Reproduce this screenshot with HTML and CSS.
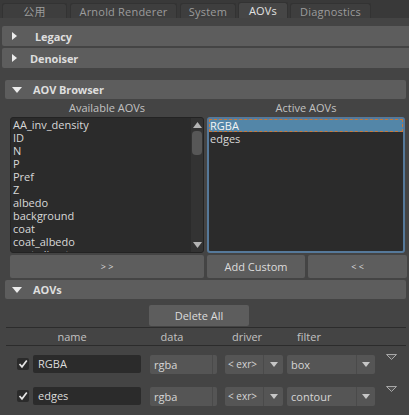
FILE: index.html
```html
<!DOCTYPE html>
<html>
<head>
<meta charset="utf-8">
<link rel="stylesheet" href="styles.css">
</head>
<body>
<div class="tabbar">
  <div class="tab tab-1">公用</div>
  <div class="tab tab-2">Arnold Renderer</div>
  <div class="tab tab-3">System</div>
  <div class="tab tab-4 active">AOVs</div>
  <div class="tab tab-5">Diagnostics</div>
</div>

<div class="fh fh-wide fh-legacy"><span class="tri-right"></span><span class="fh-title">Legacy</span></div>
<div class="fh fh-wide fh-denoiser"><span class="tri-right"></span><span class="fh-title">Denoiser</span></div>

<div class="fh fh-open fh-browser"><span class="tri-down"></span><span class="fh-title">AOV Browser</span></div>

<div class="browser">
  <div class="col-label">Available AOVs</div>
  <div class="col-label">Active AOVs</div>
  <div class="list list-left">
    <div class="items">
      <div class="item">AA_inv_density</div>
      <div class="item">ID</div>
      <div class="item">N</div>
      <div class="item">P</div>
      <div class="item">Pref</div>
      <div class="item">Z</div>
      <div class="item">albedo</div>
      <div class="item">background</div>
      <div class="item">coat</div>
      <div class="item">coat_albedo</div>
      <div class="item">coat_direct</div>
    </div>
    <div class="scrollbar">
      <svg class="sb-arrow" width="9" height="6" viewBox="0 0 9 6"><polygon points="0,6 4.5,0 9,6" fill="#b4b4b4"/></svg>
      <div class="sb-track"><div class="sb-thumb"></div></div>
      <svg class="sb-arrow" width="9" height="6" viewBox="0 0 9 6"><polygon points="0,0 4.5,6 9,0" fill="#b4b4b4"/></svg>
    </div>
  </div>
  <div class="list list-right">
    <div class="item selected">RGBA</div>
    <div class="item">edges</div>
  </div>
</div>

<div class="btnrow">
  <div class="btn btn-arrows">&gt; &gt;</div>
  <div class="btn">Add Custom</div>
  <div class="btn btn-arrows">&lt; &lt;</div>
</div>

<div class="fh fh-open fh-aovs"><span class="tri-down"></span><span class="fh-title">AOVs</span></div>

<div class="btn btn-delete">Delete All</div>

<div class="thead">
  <div class="th th-name">name</div>
  <div class="th th-data">data</div>
  <div class="th th-driver">driver</div>
  <div class="th th-filter">filter</div>
</div>

<div class="aov-row">
  <div class="check"><svg width="12" height="12" viewBox="0 0 12 12"><polyline points="2.5,6 5,8.8 9.8,2.6" fill="none" stroke="#e6e6e6" stroke-width="1.7"/></svg></div>
  <div class="namefield">RGBA</div>
  <div class="combo combo-data"><span class="combo-text">rgba</span><span class="combo-btn"></span></div>
  <div class="combo combo-driver"><span class="combo-text small">&lt; exr&gt;</span><span class="combo-btn"><span class="arrow"></span></span></div>
  <div class="combo combo-filter"><span class="combo-text">box</span><span class="combo-btn"><span class="arrow"></span></span></div>
  <svg class="outline-tri" width="11" height="6" viewBox="0 0 11 6"><polygon points="0.5,0.5 10.5,0.5 5.5,5.5" fill="#505050" stroke="#a8a8a8" stroke-width="1"/></svg>
</div>

<div class="aov-row">
  <div class="check"><svg width="12" height="12" viewBox="0 0 12 12"><polyline points="2.5,6 5,8.8 9.8,2.6" fill="none" stroke="#e6e6e6" stroke-width="1.7"/></svg></div>
  <div class="namefield">edges</div>
  <div class="combo combo-data"><span class="combo-text">rgba</span><span class="combo-btn"></span></div>
  <div class="combo combo-driver"><span class="combo-text small">&lt; exr&gt;</span><span class="combo-btn"><span class="arrow"></span></span></div>
  <div class="combo combo-filter"><span class="combo-text">contour</span><span class="combo-btn"><span class="arrow"></span></span></div>
  <svg class="outline-tri" width="11" height="6" viewBox="0 0 11 6"><polygon points="0.5,0.5 10.5,0.5 5.5,5.5" fill="#505050" stroke="#a8a8a8" stroke-width="1"/></svg>
</div>
</body>
</html>
```

FILE: styles.css
```css
* { box-sizing: border-box; }
html, body {
  margin: 0;
  padding: 0;
}
body {
  width: 409px;
  height: 415px;
  overflow: hidden;
  background: #444444;
  font-family: "Open Sans", "Noto Sans CJK SC", sans-serif;
  font-size: 11px;
  color: #dcdcdc;
}

/* tabs */
.tabbar {
  height: 18px;
  background: #393939;
  display: flex;
  align-items: flex-end;
  padding-left: 2px;
}
.tab {
  height: 15px;
  background: #3e3e3e;
  border: 1px solid #333;
  border-bottom: none;
  border-radius: 3px 3px 0 0;
  color: #9c9c9c;
  display: flex;
  align-items: center;
  justify-content: center;
  line-height: 1;
  letter-spacing: 0.2px;
}
.tab-1 { width: 65px; margin-right: 3px; font-family: "Noto Sans CJK SC", sans-serif; }
.tab-2 { width: 107px; margin-right: 3px; }
.tab-3 { width: 56px; margin-right: 2px; }
.tab-4 { width: 50px; margin-right: 2px; }
.tab-5 { width: 81px; }
.tab.active {
  background: #464646;
  color: #e2e2e2;
  height: 16px;
}

/* frame headers */
.fh {
  background: #5d5d5d;
  border-radius: 2px;
  display: flex;
  align-items: center;
  font-weight: bold;
  color: #dedede;
  letter-spacing: -0.1px;
}
.fh-wide {
  height: 20px;
  margin-left: 2px;
  margin-right: -4px;
  padding-left: 10px;
}
.fh-legacy { margin-top: 8px; }
.fh-legacy .fh-title { margin-left: 18px; }
.fh-denoiser { margin-top: 2px; }
.fh-denoiser .fh-title { margin-left: 13px; }
.fh-open {
  height: 19px;
  margin-left: 5px;
  margin-right: 3px;
  padding-left: 7px;
}
.fh-open .fh-title { margin-left: 11px; }
.fh-browser { margin-top: 12px; }
.fh-aovs { margin-top: 2px; }
.tri-right {
  width: 0; height: 0;
  border-left: 5px solid #ececec;
  border-top: 4.5px solid transparent;
  border-bottom: 4.5px solid transparent;
}
.tri-down {
  width: 0; height: 0;
  border-top: 6px solid #ececec;
  border-left: 5px solid transparent;
  border-right: 5px solid transparent;
}

/* browser */
.browser {
  display: grid;
  grid-template-columns: 194px 198px;
  grid-template-rows: 18px 136px;
  column-gap: 3px;
  margin-left: 10px;
}
.col-label {
  text-align: center;
  color: #c2c2c2;
  line-height: 18px;
}
.list {
  background: #2b2b2b;
  border-radius: 3px;
  overflow: hidden;
}
.list-left {
  border: 1px solid #232323;
  display: flex;
}
.list-right {
  border: 2px solid #56799a;
  padding-top: 0;
}
.items { flex: 1; padding-left: 2px; overflow: hidden; }
.item {
  height: 13px;
  line-height: 13px;
  white-space: nowrap;
  color: #d8d8d8;
}
.list-right .item { padding-left: 1px; }
.item.selected {
  background: #5386a8;
  outline: 1px dashed #c8783a;
  outline-offset: -1px;
  color: #f4f4f4;
}
.scrollbar {
  width: 12px;
  background: #333333;
  display: flex;
  flex-direction: column;
  align-items: center;
  padding: 4px 0 4px;
}
.sb-arrow { flex: none; }
.sb-track { flex: 1; width: 100%; padding: 3px 1px 0; }
.sb-thumb {
  height: 24px;
  background: #575757;
  border-radius: 4px;
}

/* buttons */
.btnrow {
  display: grid;
  grid-template-columns: 194px 98px 99px;
  column-gap: 3px;
  margin: 2px 0 0 10px;
}
.btn {
  height: 23px;
  background: #5d5d5d;
  border-radius: 2px;
  display: flex;
  align-items: center;
  justify-content: center;
  color: #dcdcdc;
}
.btn-arrows { font-size: 9px; letter-spacing: 0; }
.btn-delete {
  width: 100px;
  height: 21px;
  margin: 6px 0 0 149px;
}

/* table */
.thead {
  display: grid;
  grid-template-columns: 132px 68px 82px 42px;
  margin: 1px 3px 0 6px;
  height: 19px;
  border-top: 1px solid #2c2c2c;
  border-bottom: 1px solid #2c2c2c;
}
.th {
  text-align: center;
  color: #c2c2c2;
  line-height: 17px;
}
.aov-row {
  display: flex;
  align-items: center;
  height: 20px;
  padding-left: 17px;
  margin-top: 8px;
}
.aov-row + .aov-row { margin-top: 12px; }
.check {
  width: 12px;
  height: 12px;
  background: #2b2b2b;
  border-radius: 2px;
  margin-right: 4px;
  display: flex;
}
.namefield {
  width: 108px;
  height: 18px;
  background: #2b2b2b;
  border-radius: 2px;
  margin-right: 9px;
  padding-left: 5px;
  line-height: 18px;
  color: #dcdcdc;
}
.combo {
  height: 19px;
  background: #555555;
  border-radius: 2px;
  display: flex;
  align-items: stretch;
}
.combo-text {
  flex: 1;
  padding-left: 4px;
  line-height: 19px;
  color: #d6d6d6;
  white-space: nowrap;
}
.combo-text.small { font-size: 10px; padding-left: 3px; }
.combo-btn {
  border-left: 1px solid #4a4a4a;
  display: flex;
  align-items: center;
  justify-content: center;
}
.arrow {
  width: 0; height: 0;
  border-top: 5px solid #c6c6c6;
  border-left: 4.5px solid transparent;
  border-right: 4.5px solid transparent;
}
.combo-data { width: 67px; margin-right: 8px; }
.combo-data .combo-btn { width: 5px; }
.combo-driver { width: 58px; margin-right: 4px; }
.combo-driver .combo-btn { width: 20px; }
.combo-filter { width: 88px; margin-right: 11px; }
.combo-filter .combo-btn { width: 19px; }
.outline-tri { align-self: flex-start; margin-top: 0; }
```
